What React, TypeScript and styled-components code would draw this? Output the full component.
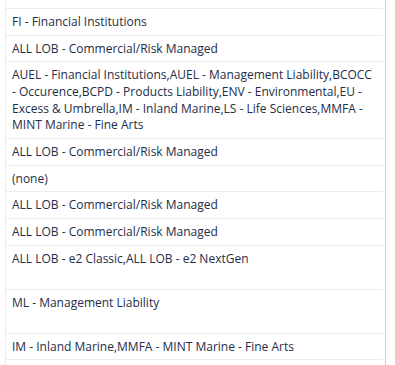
import React from 'react';
import styled, { createGlobalStyle } from 'styled-components';

const GlobalStyle = createGlobalStyle`
  html, body {
    margin: 0;
    padding: 0;
    background: #ffffff;
  }
`;

type Item = { text: string; tall?: boolean };

const items: Item[] = [
  { text: 'FI - Financial Institutions' },
  { text: 'ALL LOB - Commercial/Risk Managed' },
  {
    text:
      'AUEL - Financial Institutions,AUEL - Management Liability,BCOCC - Occurence,BCPD - Products Liability,ENV - Environmental,EU - Excess & Umbrella,IM - Inland Marine,LS - Life Sciences,MMFA - MINT Marine - Fine Arts',
  },
  { text: 'ALL LOB - Commercial/Risk Managed' },
  { text: '(none)' },
  { text: 'ALL LOB - Commercial/Risk Managed' },
  { text: 'ALL LOB - Commercial/Risk Managed' },
  { text: 'ALL LOB - e2 Classic,ALL LOB - e2 NextGen', tall: true },
  { text: 'ML - Management Liability', tall: true },
  { text: 'IM - Inland Marine,MMFA - MINT Marine - Fine Arts' },
];

const App = () => {
  return (
    <>
      <GlobalStyle />
      <StyledPage>
        <StyledColumn>
          <StyledCutRow />
          {items.map((item, i) => (
            <StyledRow key={i} $tall={item.tall}>
              {item.text}
            </StyledRow>
          ))}
        </StyledColumn>
      </StyledPage>
    </>
  );
};

const StyledPage = styled.div`
  display: flex;
  padding-left: 5px;
  height: 365px;
  overflow: hidden;
`;

const StyledColumn = styled.div`
  display: flex;
  flex-direction: column;
  width: 377px;
  border-left: 1px solid #edebe9;
  border-right: 1px solid #d2d0ce;
  padding-right: 2px;
`;

const StyledCutRow = styled.div`
  height: 8px;
  flex-shrink: 0;
  border-bottom: 1px solid #edebe9;
`;

const StyledRow = styled.div<{ $tall?: boolean }>`
  flex-shrink: 0;
  box-sizing: border-box;
  min-height: ${(p) => (p.$tall ? '44px' : '0')};
  padding: 5px 5px 4px 6px;
  border-bottom: 1px solid #edebe9;
  font-family: 'Open Sans', 'Noto Sans', sans-serif;
  font-size: 12px;
  line-height: 16.67px;
  color: #242d47;
`;

export default App;
